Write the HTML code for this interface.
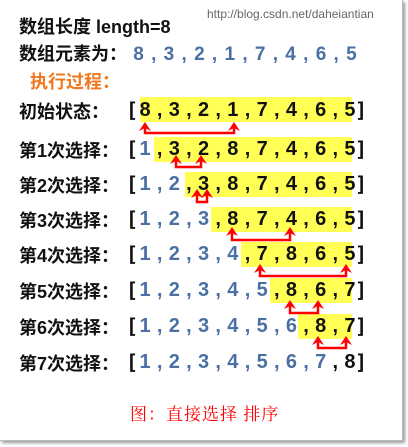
<!DOCTYPE html><html><head><meta charset="utf-8"><style>
body{margin:0;width:408px;height:447px;background:#fff;position:relative;overflow:hidden;font-family:"Liberation Sans","Noto Sans CJK SC",sans-serif}
.frame{position:absolute;left:0;top:0;width:402px;height:440px;background:#fff;border-right:1px solid #bbb;border-bottom:1px solid #bbb;box-shadow:2px 2px 3px #999}
.t{position:absolute;font-weight:bold;white-space:nowrap}
.lab{left:19px;font-size:18px;color:#111}
.row{position:absolute;left:137.7px;height:26px;font-size:20px;font-weight:bold;line-height:26px;white-space:nowrap}
.row span{display:inline-block;width:14.65px;text-align:center}
.b{color:#4a70a4}.k{color:#111}
.y{position:absolute;background:#ffff55;height:25px}
.br{position:absolute;font-size:20px;font-weight:bold;color:#111;line-height:26px;font-family:"DejaVu Sans Mono",monospace}
</style></head><body><div class="frame"></div>
<div class="t" style="left:207px;top:7px;font-size:12px;font-weight:normal;color:#666">http://blog.csdn.net/daheiantian</div>
<div class="t lab" style="top:13px;font-size:18px">数组长度 length=8</div>
<div class="t lab" style="top:40px;font-size:18px">数组元素为：<span style="color:#4a70a4;font-size:19px;letter-spacing:1px">&nbsp;8 , 3 , 2 , 1 , 7 , 4 , 6 , 5</span></div>
<div class="t" style="left:30px;top:68px;font-size:18px;color:#f07820">执行过程：</div>

<div class="y" style="left:140px;top:97px;width:212px"></div>
<div class="y" style="left:154px;top:137px;width:198px"></div>
<div class="y" style="left:185px;top:172px;width:167px"></div>
<div class="y" style="left:211px;top:207px;width:141px"></div>
<div class="y" style="left:241px;top:242px;width:111px"></div>
<div class="y" style="left:270px;top:278px;width:82px"></div>
<div class="y" style="left:298px;top:314px;width:54px"></div>

<div class="t lab" style="top:98px">初始状态：</div>
<div class="t lab" style="top:137px">第1次选择：</div>
<div class="t lab" style="top:172px">第2次选择：</div>
<div class="t lab" style="top:207px">第3次选择：</div>
<div class="t lab" style="top:242px">第4次选择：</div>
<div class="t lab" style="top:278px">第5次选择：</div>
<div class="t lab" style="top:314px">第6次选择：</div>
<div class="t lab" style="top:350px">第7次选择：</div>

<div class="br" style="left:126px;top:97px">[</div><div class="br" style="left:355px;top:97px">]</div>
<div class="br" style="left:126px;top:136px">[</div><div class="br" style="left:355px;top:136px">]</div>
<div class="br" style="left:126px;top:171px">[</div><div class="br" style="left:355px;top:171px">]</div>
<div class="br" style="left:126px;top:206px">[</div><div class="br" style="left:355px;top:206px">]</div>
<div class="br" style="left:126px;top:241px">[</div><div class="br" style="left:355px;top:241px">]</div>
<div class="br" style="left:126px;top:277px">[</div><div class="br" style="left:355px;top:277px">]</div>
<div class="br" style="left:126px;top:313px">[</div><div class="br" style="left:355px;top:313px">]</div>
<div class="br" style="left:126px;top:349px">[</div><div class="br" style="left:355px;top:349px">]</div>

<div class="row k" style="top:97px"><span>8</span><span>,</span><span>3</span><span>,</span><span>2</span><span>,</span><span>1</span><span>,</span><span>7</span><span>,</span><span>4</span><span>,</span><span>6</span><span>,</span><span>5</span></div>
<div class="row k" style="top:136px"><span class="b">1</span><span>,</span><span>3</span><span>,</span><span>2</span><span>,</span><span>8</span><span>,</span><span>7</span><span>,</span><span>4</span><span>,</span><span>6</span><span>,</span><span>5</span></div>
<div class="row k" style="top:171px"><span class="b">1</span><span class="b">,</span><span class="b">2</span><span>,</span><span>3</span><span>,</span><span>8</span><span>,</span><span>7</span><span>,</span><span>4</span><span>,</span><span>6</span><span>,</span><span>5</span></div>
<div class="row k" style="top:206px"><span class="b">1</span><span class="b">,</span><span class="b">2</span><span class="b">,</span><span class="b">3</span><span>,</span><span>8</span><span>,</span><span>7</span><span>,</span><span>4</span><span>,</span><span>6</span><span>,</span><span>5</span></div>
<div class="row k" style="top:241px"><span class="b">1</span><span class="b">,</span><span class="b">2</span><span class="b">,</span><span class="b">3</span><span class="b">,</span><span class="b">4</span><span>,</span><span>7</span><span>,</span><span>8</span><span>,</span><span>6</span><span>,</span><span>5</span></div>
<div class="row k" style="top:277px"><span class="b">1</span><span class="b">,</span><span class="b">2</span><span class="b">,</span><span class="b">3</span><span class="b">,</span><span class="b">4</span><span class="b">,</span><span class="b">5</span><span>,</span><span>8</span><span>,</span><span>6</span><span>,</span><span>7</span></div>
<div class="row k" style="top:313px"><span class="b">1</span><span class="b">,</span><span class="b">2</span><span class="b">,</span><span class="b">3</span><span class="b">,</span><span class="b">4</span><span class="b">,</span><span class="b">5</span><span class="b">,</span><span class="b">6</span><span>,</span><span>8</span><span>,</span><span>7</span></div>
<div class="row k" style="top:349px"><span class="b">1</span><span class="b">,</span><span class="b">2</span><span class="b">,</span><span class="b">3</span><span class="b">,</span><span class="b">4</span><span class="b">,</span><span class="b">5</span><span class="b">,</span><span class="b">6</span><span class="b">,</span><span class="b">7</span><span>,</span><span>8</span></div>

<svg style="position:absolute;left:0;top:0" width="408" height="447">
<defs><path id="h" d="M-6 8 L0 -1 L6 8 L0 5 Z" fill="#f00"/></defs>
<g stroke="#f00" stroke-width="2.5" fill="none">
<path d="M145 126V133H234V126"/><path d="M176 159V167H201V159"/><path d="M197 193V202H207V193"/>
<path d="M232 231V240H290V231"/><path d="M260 268V276H346V268"/><path d="M290 304V313H318V304"/><path d="M318 340V348H346V340"/>
</g>
<use href="#h" x="145" y="123"/><use href="#h" x="234" y="123"/>
<use href="#h" x="176" y="156"/><use href="#h" x="201" y="156"/>
<use href="#h" x="197" y="190"/><use href="#h" x="207" y="190"/>
<use href="#h" x="232" y="228"/><use href="#h" x="290" y="228"/>
<use href="#h" x="260" y="265"/><use href="#h" x="346" y="265"/>
<use href="#h" x="290" y="301"/><use href="#h" x="318" y="301"/>
<use href="#h" x="318" y="337"/><use href="#h" x="346" y="337"/>
</svg>
<div class="t" style="left:130px;top:400px;font-size:17px;font-weight:normal;color:#f00;letter-spacing:1px;font-family:'Noto Serif CJK SC','Noto Sans CJK SC',serif">图：直接选择 排序</div>
</body></html>
